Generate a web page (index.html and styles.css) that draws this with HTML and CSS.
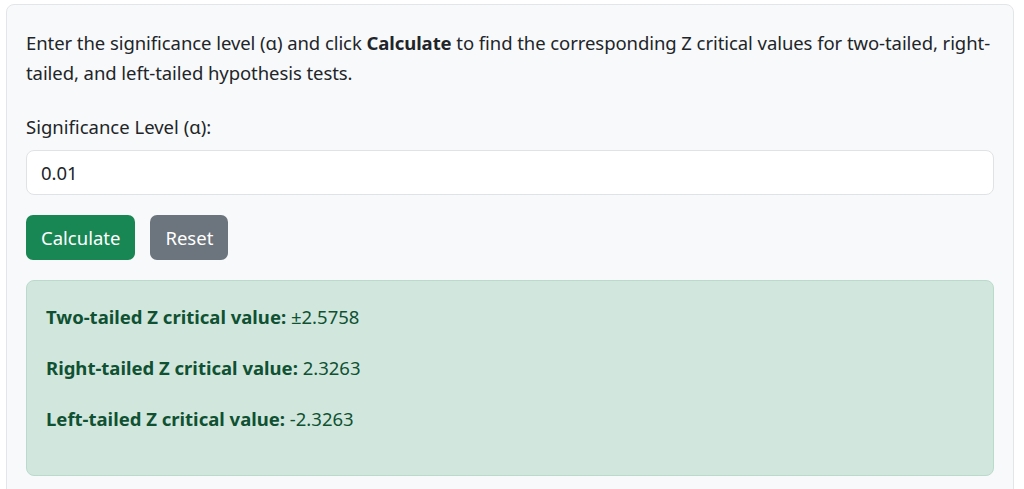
FILE: index.html
```html
<!DOCTYPE html>
<html lang="en">

<head>
    <meta charset="UTF-8">
    <meta name="viewport" content="width=device-width, initial-scale=1.0">
    <title>Z Critical Value Calculator</title>
    <link rel="stylesheet" href="styles.css">
</head>

<body>
    <div class="calc">
        <p class="intro">Enter the significance level (α) and click <strong>Calculate</strong> to find the corresponding Z critical values for two-tailed, right-tailed, and left-tailed hypothesis tests.</p>

        <label class="name" for="alpha">Significance Level (α):</label>
        <input class="input" id="alpha" type="text" value="0.01">

        <div class="actions">
            <button class="btn btn-calc" type="button">Calculate</button>
            <button class="btn btn-reset" type="button">Reset</button>
        </div>

        <div class="result">
            <p><strong>Two-tailed Z critical value:</strong> ±2.5758</p>
            <p><strong>Right-tailed Z critical value:</strong> 2.3263</p>
            <p><strong>Left-tailed Z critical value:</strong> -2.3263</p>
        </div>
    </div>
</body>

</html>
```

FILE: styles.css
```css
body {
    margin: 4px 10px 0 6px;
    font-family: "Noto Sans", "Open Sans", sans-serif;
    font-size: 18.5px;
    line-height: 30px;
    color: #212529;
}

.calc {
    background-color: #f8f9fa;
    border: 1px solid #e3e6e9;
    border-radius: 8px;
    padding: 23px 19px 20px;
}

.intro {
    margin: 0 0 24px;
    letter-spacing: -0.07px;
}

label.name {
    display: block;
    margin-bottom: 8px;
}

.input {
    display: block;
    width: 100%;
    height: 45px;
    box-sizing: border-box;
    padding: 0 14px;
    font: inherit;
    color: #212529;
    background-color: #fff;
    border: 1px solid #e0e3e6;
    border-radius: 8px;
}

.actions {
    display: flex;
    gap: 15px;
    margin: 20px 0;
}

.btn {
    height: 45px;
    padding: 0 15px;
    font: inherit;
    color: #fff;
    border: 0;
    border-radius: 7px;
    cursor: pointer;
}

.btn-calc {
    background-color: #198754;
}

.btn-reset {
    background-color: #6c757d;
}

.result {
    background-color: #d1e7dd;
    border: 1px solid #badbcc;
    border-radius: 8px;
    padding: 21px 19px 20px;
    color: #0f5132;
}

.result p {
    margin: 0 0 21px;
}
```
